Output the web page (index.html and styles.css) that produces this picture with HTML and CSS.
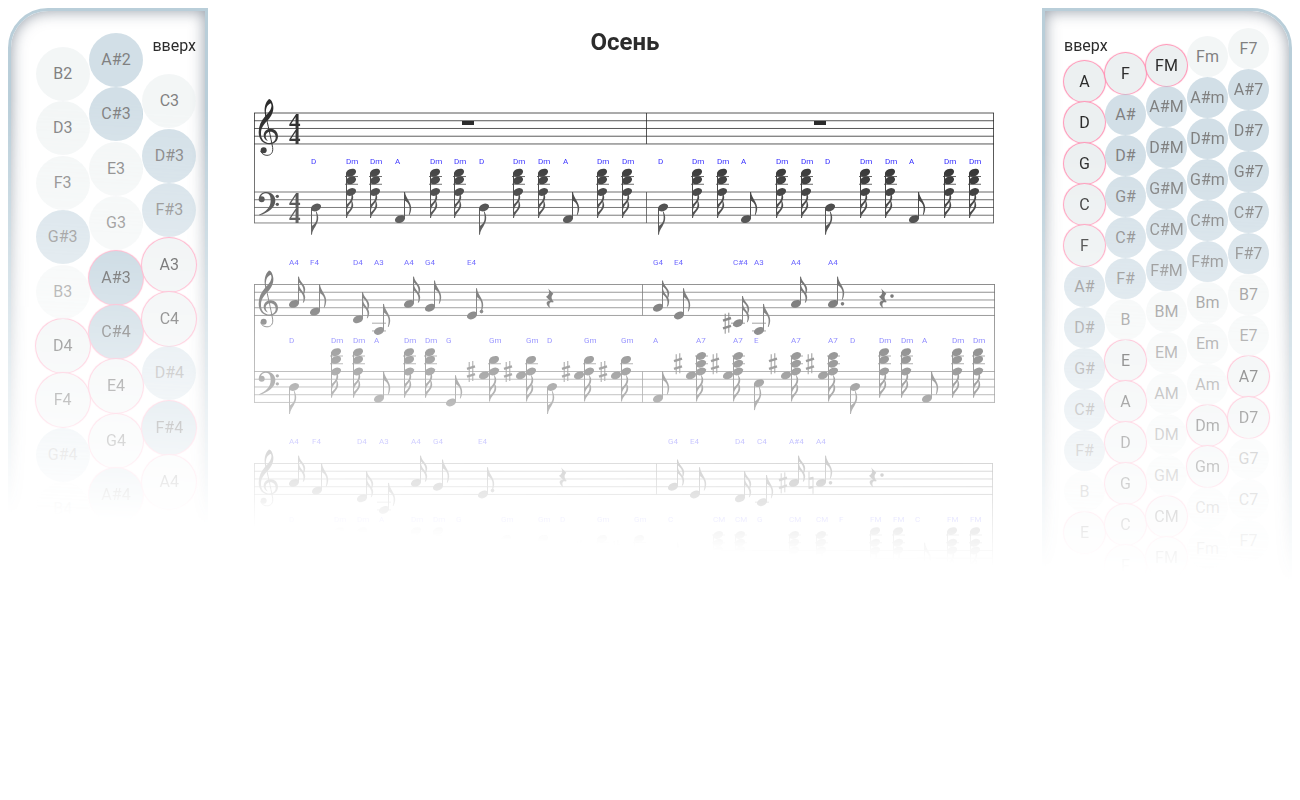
FILE: index.html
```html
<!DOCTYPE html>
<html lang="ru">
<head>
<meta charset="utf-8">
<title>Осень</title>
<link rel="stylesheet" href="styles.css">
</head>
<body>
<div class="page">
  <aside class="panel panel-left" aria-label="Мелодия">
    <div class="column">
      <button class="key">B2</button><button class="key">D3</button><button class="key">F3</button><button class="key sharp">G#3</button><button class="key">B3</button><button class="key on">D4</button><button class="key on">F4</button><button class="key sharp">G#4</button><button class="key">B4</button>
    </div>
    <div class="column">
      <button class="key sharp">A#2</button><button class="key sharp">C#3</button><button class="key">E3</button><button class="key">G3</button><button class="key sharp on">A#3</button><button class="key sharp on">C#4</button><button class="key on">E4</button><button class="key on">G4</button><button class="key sharp on">A#4</button>
    </div>
    <div class="column">
      <span class="direction">вверх</span>
      <button class="key">C3</button><button class="key sharp">D#3</button><button class="key sharp">F#3</button><button class="key on">A3</button><button class="key on">C4</button><button class="key sharp">D#4</button><button class="key sharp on">F#4</button><button class="key on">A4</button>
    </div>
  </aside>

  <main class="sheet">
    <h1 class="title">Осень</h1>
    <svg class="score" id="score" viewBox="250 90 750 480" role="img" aria-label="Ноты">
      <defs>
        <g id="treble" transform="scale(.3333)">
          <path fill-rule="evenodd" d="M45 -42C33 -31 29 -14 34 9C21 23 14 39 14 58C14 79 27 94 46 94C63 94 72 83 72 70C72 56 62 47 50 47C37 47 29 57 29 67C29 76 34 82 42 84C37 79 35 74 35 69C35 61 41 56 49 56C59 56 65 63 65 73C65 83 58 90 47 90C31 90 21 78 21 62C21 43 31 33 41 22C52 10 59 -3 58 -19C57 -30 52 -41 45 -42ZM50 -29C56 -22 51 -7 37 6C33 -10 39 -25 50 -29Z"/>
          <path class="stem-line" d="M35 6C41 32 50 72 56 104C58 121 49 127 39 127C31 127 23 123 20 114"/>
          <circle cx="29" cy="112" r="9"/>
        </g>
        <g id="bass" transform="scale(.3333)">
          <path d="M15 23C14 8 25 0 37 0C53 0 64 11 64 26C64 47 42 63 16 70L15 68C36 59 50 45 50 26C50 13 46 4 36 4C28 4 22 9 20 15Z"/>
          <circle cx="23" cy="22" r="9"/><circle cx="70" cy="13" r="5"/><circle cx="70" cy="37" r="5"/>
        </g>
        <path id="rest" transform="scale(.3333)" d="M-6 12L10 28C2 37 4 43 11 52L9 54C-1 50 -5 58 1 71C-13 63 -14 49 0 49L-12 37C-1 30 0 22 -6 12Z"/>
        <path id="flag" d="M-.5 0H.5C1 6 7 10 6.7 17Q6.5 20 5 23H4.3C6.3 15 5 11 -.5 8Z"/>
        <path id="flag-short" d="M-.5 0H.5C1 5 7 8 6.7 13Q6.5 16 5 18H4.3C6 13 5 9 -.5 5Z"/>
        <ellipse id="head" rx="5.3" ry="3.6" transform="rotate(-24)"/>
        <g id="sharp">
          <path d="M-1.8 -9.5V10.5M1.8 -10.5V9.5"/>
          <path class="bar" d="M-4 -2.6L4 -5.2M-4 5.2L4 2.6"/>
        </g>
        <g id="natural">
          <path d="M-2 -11V6M2 -6V11"/>
          <path class="bar" d="M-2 -4L2 -5M-2 5L2 4"/>
        </g>
      </defs>
      <text class="meter"><tspan x="289" y="128.5">4</tspan><tspan x="289" y="144">4</tspan></text>
      <text class="meter"><tspan x="289" y="207.5">4</tspan><tspan x="289" y="223">4</tspan></text>
    </svg>
  </main>

  <aside class="panel panel-right" aria-label="Аккорды">
    <div class="column">
      <span class="direction">вверх</span>
      <button class="key on">A</button><button class="key on">D</button><button class="key on">G</button><button class="key on">C</button><button class="key on">F</button><button class="key sharp">A#</button><button class="key sharp">D#</button><button class="key sharp">G#</button><button class="key sharp">C#</button><button class="key sharp">F#</button><button class="key">B</button><button class="key on">E</button>
    </div>
    <div class="column">
      <button class="key on">F</button><button class="key sharp">A#</button><button class="key sharp">D#</button><button class="key sharp">G#</button><button class="key sharp">C#</button><button class="key sharp">F#</button><button class="key">B</button><button class="key on">E</button><button class="key on">A</button><button class="key on">D</button><button class="key on">G</button><button class="key on">C</button><button class="key on">F</button>
    </div>
    <div class="column">
      <button class="key on">FM</button><button class="key sharp">A#M</button><button class="key sharp">D#M</button><button class="key sharp">G#M</button><button class="key sharp">C#M</button><button class="key sharp">F#M</button><button class="key">BM</button><button class="key">EM</button><button class="key">AM</button><button class="key">DM</button><button class="key">GM</button><button class="key on">CM</button><button class="key on">FM</button>
    </div>
    <div class="column">
      <button class="key">Fm</button><button class="key sharp">A#m</button><button class="key sharp">D#m</button><button class="key sharp">G#m</button><button class="key sharp">C#m</button><button class="key sharp">F#m</button><button class="key">Bm</button><button class="key">Em</button><button class="key">Am</button><button class="key on">Dm</button><button class="key on">Gm</button><button class="key">Cm</button><button class="key">Fm</button>
    </div>
    <div class="column">
      <button class="key">F7</button><button class="key sharp">A#7</button><button class="key sharp">D#7</button><button class="key sharp">G#7</button><button class="key sharp">C#7</button><button class="key sharp">F#7</button><button class="key">B7</button><button class="key">E7</button><button class="key on">A7</button><button class="key on">D7</button><button class="key">G7</button><button class="key">C7</button><button class="key">F7</button>
    </div>
  </aside>
</div>
<script src="score.js"></script>
</body>
</html>
```
FILE: styles.css
```css
* { box-sizing: border-box; }

body {
  margin: 0;
  background: #fff;
  color: #2c2c2c;
  font-family: Roboto, "Liberation Sans", sans-serif;
  font-size: 16px;
}

.page {
  display: grid;
  grid-template-columns: 200px 1fr 250px;
  height: 100vh;
  padding: 8px;
  overflow: hidden;
  -webkit-mask-image: linear-gradient(183deg, #000 19%, transparent 67%);
  mask-image: linear-gradient(183deg, #000 19%, transparent 67%);
}

.panel {
  display: flex;
  align-items: flex-start;
  border: 3px solid #b9ced9;
  box-shadow: inset 0 0 15px rgba(60, 75, 95, .55);
  overflow: hidden;
}

.panel-left {
  padding: 22px 9px 0 25px;
  border-radius: 40px 0 0 0;
}

.panel-right {
  padding: 17px 20px 0 19px;
  border-radius: 0 40px 0 0;
}

.column {
  display: flex;
  flex: 1;
  flex-direction: column;
  align-items: center;
  min-width: 0;
}

.panel-left .column {
  height: 489px;
  justify-content: space-between;
}

.panel-left .column:nth-child(1) { margin-top: 14px; }
.panel-left .column:nth-child(3) { height: 476px; }

.panel-right .column:nth-child(2) { padding-top: 25px; }
.panel-right .column:nth-child(3) { padding-top: 17px; }
.panel-right .column:nth-child(4) { padding-top: 8px; }

.direction {
  line-height: 26px;
  height: 33px;
}

.panel-left .direction {
  align-self: flex-end;
  height: 41px;
}

.panel-right .direction {
  align-self: flex-start;
  width: 41px;
  padding: 5px 0 0 0;
}

.key {
  flex: none;
  width: 41px;
  height: 41px;
  padding: 0;
  border: 0;
  border-radius: 50%;
  background: #ecf0f1;
  color: inherit;
  font: inherit;
  line-height: 24px;
  opacity: .6;
  cursor: pointer;
}

.panel-left .key {
  width: 54px;
  height: 54px;
}

.key.sharp { background: #b4cad7; }

.key.on {
  opacity: 1;
  box-shadow: 0 0 1px 1px #ff8fb2;
}

.sheet {
  min-width: 0;
  padding: 0 42px;
}

.title {
  margin: 19px 0 33px;
  font-size: 24px;
  line-height: 30px;
  text-align: center;
}

.score {
  display: block;
  width: 100%;
  fill: #2c2c2c;
  stroke: none;
}

.score .line { fill: none; stroke: #2c2c2c; stroke-width: 1; }
.score .ledger { fill: none; stroke: #2c2c2c; stroke-width: .8; }
.score .mark { fill: none; stroke: #2c2c2c; stroke-width: 1; }
.score .bar { stroke-width: 2.4; }
.score .stem-line { fill: none; stroke: #2c2c2c; stroke-width: 3; }
.score .label { fill: #2018ff; font-size: 8px; }
.score .meter { font-family: "Liberation Serif", serif; font-size: 23px; font-weight: bold; }
```
FILE: score.js
```js
const NS = "http://www.w3.org/2000/svg";
const score = document.getElementById("score");
const HALF = 3.87;

function add(name, attrs, text) {
  const el = document.createElementNS(NS, name);
  for (const key in attrs) el.setAttribute(key, attrs[key]);
  if (text) el.textContent = text;
  score.appendChild(el);
}
const use = (id, x, y, extra = "", cls = "") =>
  add("use", { href: "#" + id, transform: `translate(${x} ${y}) ${extra}`, class: cls });
const line = (x1, y1, x2, y2, cls = "line") =>
  add("path", { d: `M${x1} ${y1}L${x2} ${y2}`, class: cls });

// Staff position counted in half spaces down from the top line.
const TREBLE = { A4: 5, "A#4": 5, G4: 6, F4: 7, E4: 8, D4: 9, C4: 10, "C#4": 10, A3: 12 };
const SINGLE = { D: [4, "down"], E: [3, "down"], A: [7, "up"], G: [8, "up"], C: [5, "up"], F: [9, "up"] };
const CHORD = {
  Dm: { heads: [-5, -3, 0], ledgers: [-4, -2] },
  Gm: { heads: [-3, 0], left: 1, ledgers: [-2], sharp: 0 },
  A7: { heads: [-4, -2, 0], left: 1, ledgers: [-4, -2], sharp: -2 },
  CM: { heads: [-4, -2, 0], ledgers: [-4, -2] },
  FM: { heads: [-5, -2, 0], ledgers: [-4, -2] }
};

function stemUp(x, y, flags) {
  use("head", x + 5, y);
  line(x + 9.5, y - 1, x + 9.5, y - 27);
  use(flags === 2 ? "flag-short" : "flag", x + 9.5, y - 27);
  if (flags === 2) use("flag-short", x + 9.5, y - 19);
}

function melody(top, labelY, notes) {
  for (const [name, x, flags, extra = ""] of notes) {
    if (name === "rest") {
      use("rest", x, top);
      if (extra) add("circle", { cx: x + 9, cy: top + 3 * HALF, r: 1.8 });
      continue;
    }
    const step = TREBLE[name], y = top + step * HALF;
    add("text", { x, y: labelY, class: "label" }, name);
    stemUp(x, y, flags);
    for (let s = 10; s <= step; s += 2) line(x - 2, top + s * HALF, x + 12, top + s * HALF, "ledger");
    if (name.includes("#")) use("sharp", x - 6, y, "", "mark");
    if (extra === "natural.") use("natural", x - 5, y, "", "mark");
    if (extra.endsWith(".")) add("circle", { cx: x + 14.5, cy: top + (step - (step % 2 ? 0 : 1)) * HALF, r: 1.8 });
  }
}

function harmony(top, labelY, notes) {
  for (const [name, x] of notes) {
    add("text", { x, y: labelY, class: "label" }, name);
    if (SINGLE[name]) {
      const [step, dir] = SINGLE[name], y = top + step * HALF;
      if (dir === "up") { stemUp(x, y, 1); continue; }
      use("head", x + 5, y);
      line(x + .5, y + 1, x + .5, y + 27);
      use("flag", x + .5, y + 27, "scale(1 -1)");
      continue;
    }
    const c = CHORD[name];
    for (const s of c.heads) use("head", x + 5, top + s * HALF);
    for (const s of c.ledgers) line(x - 1, top + s * HALF, x + 12, top + s * HALF, "ledger");
    let low = 0;
    if (c.left) { use("head", x - 5, top + c.left * HALF); low = c.left; }
    if (c.sharp !== undefined) use("sharp", x - 18, top + c.sharp * HALF, "", "mark");
    const end = top + low * HALF + 26;
    line(x + .5, top + c.heads[0] * HALF, x + .5, end);
    use("flag-short", x + .5, end, "scale(1 -1)");
    use("flag-short", x + .5, end - 8, "scale(1 -1)");
  }
}

function system(top, bassTop, right, bar) {
  for (const t of [top, bassTop]) {
    for (let i = 0; i < 5; i++) line(254, t + i * 2 * HALF, right, t + i * 2 * HALF, "ledger");
    line(bar, t, bar, t + 8 * HALF, "ledger");
  }
  line(254.5, top, 254.5, bassTop + 8 * HALF, "ledger");
  line(right - .5, top, right - .5, bassTop + 8 * HALF, "ledger");
  use("treble", 254, top);
  use("bass", 254, bassTop);
}

const read = text => text.split(" ").map(item => {
  const [name, x] = item.split("@");
  return [name, Number(x)];
});

system(113, 192, 994, 646.5);
for (const x of [462, 814]) add("rect", { x, y: 121, width: 12, height: 4 });
harmony(192, 164, read("D@311 Dm@346 Dm@370 A@395 Dm@430 Dm@454 D@479 Dm@513 Dm@538 A@563 Dm@597 Dm@622 D@658 Dm@692 Dm@717 A@741 Dm@776 Dm@801 D@825 Dm@860 Dm@885 A@909 Dm@944 Dm@969"));

system(284.5, 371.5, 995, 642.5);
melody(284.5, 265, [["A4", 289, 2], ["F4", 310, 1], ["D4", 353, 2], ["A3", 374, 1], ["A4", 404, 2], ["G4", 425, 1], ["E4", 467, 1, "."], ["rest", 550], ["G4", 653, 2], ["E4", 674, 1], ["C#4", 733, 2], ["A3", 754, 1], ["A4", 791, 2], ["A4", 828, 1, "."], ["rest", 883, 0, "."]]);
harmony(371.5, 343, read("D@289 Dm@331 Dm@353 A@374 Dm@404 Dm@425 G@446 Gm@489 Gm@526 D@547 Gm@584 Gm@621 A@653 A7@696 A7@733 E@754 A7@791 A7@828 D@850 Dm@879 Dm@901 A@922 Dm@952 Dm@973"));

system(463.5, 550.5, 993, 656.5);
melody(463.5, 444, [["A4", 289, 2], ["F4", 312, 1], ["D4", 357, 2], ["A3", 379, 1], ["A4", 411, 2], ["G4", 433, 1], ["E4", 478, 1, "."], ["rest", 563], ["G4", 668, 2], ["E4", 690, 1], ["D4", 735, 2], ["C4", 757, 1], ["A#4", 789, 2], ["A4", 816, 1, "natural."], ["rest", 873, 0, "."]]);
harmony(550.5, 522, read("D@289 Dm@334 Dm@357 A@379 Dm@411 Dm@433 G@456 Gm@501 Gm@538 D@560 Gm@597 Gm@634 C@668 CM@713 CM@735 G@757 CM@789 CM@816 F@839 FM@870 FM@893 C@915 FM@947 FM@970"));
```
